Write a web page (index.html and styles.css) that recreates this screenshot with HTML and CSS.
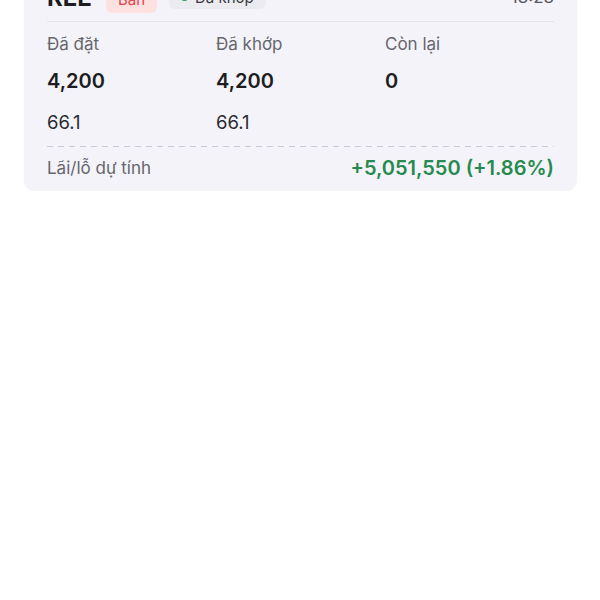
FILE: index.html
```html
<!DOCTYPE html>
<html lang="vi">
<head>
    <meta charset="UTF-8">
    <meta name="viewport" content="width=device-width, initial-scale=1.0">
    <title>Lệnh đã khớp</title>
    <link rel="stylesheet" href="styles.css">
</head>
<body>
    <div class="order-card">
        <div class="order-head">
            <span class="symbol">REE</span>
            <span class="badge badge-sell">Bán</span>
            <span class="badge badge-status"><i class="dot"></i>Đã khớp</span>
            <span class="time">13:23</span>
        </div>
        <div class="order-grid">
            <div class="cell label">Đã đặt</div>
            <div class="cell label">Đã khớp</div>
            <div class="cell label">Còn lại</div>
            <div class="cell qty">4,200</div>
            <div class="cell qty">4,200</div>
            <div class="cell qty">0</div>
            <div class="cell price">66.1</div>
            <div class="cell price">66.1</div>
            <div class="cell price"></div>
        </div>
        <div class="dash"></div>
        <div class="order-foot">
            <span class="foot-label">Lãi/lỗ dự tính</span>
            <span class="foot-value">+5,051,550 (+1.86%)</span>
        </div>
    </div>
</body>
</html>
```

FILE: styles.css
```css
body {
    margin: 0;
    background: #fff;
    font-family: Inter, "Noto Sans", sans-serif;
    color: #1d1d22;
}
.order-card {
    margin: -33px 23px 0 24px;
    padding: 16px 23px 11px;
    background: #f4f3f9;
    border-radius: 12px;
    box-shadow: 0 1px 2px rgba(0, 0, 0, 0.04);
}
.order-head {
    display: flex;
    align-items: center;
    gap: 12px;
    height: 28px;
    padding-bottom: 10px;
    border-bottom: 1px solid #e6e5ec;
}
.symbol {
    font-size: 24px;
    font-weight: 700;
    margin-right: 2px;
}
.badge {
    display: inline-flex;
    align-items: center;
    height: 24px;
    padding: 0 12px;
    border-radius: 6px;
    font-size: 15px;
}
.badge-sell {
    background: #fde1e1;
    color: #e0454a;
    height: 28px;
    padding: 0 12px;
    margin-top: 4px;
}
.badge-status {
    background: #ecebf0;
    color: #3a3a40;
}
.dot {
    width: 7px;
    height: 7px;
    border-radius: 50%;
    background: #2f9a5a;
    margin-right: 7px;
}
.time {
    margin-left: auto;
    font-size: 17px;
    color: #55555c;
}
.order-grid {
    display: grid;
    grid-template-columns: repeat(3, 1fr);
    padding-top: 11px;
}
.cell.label {
    font-size: 17px;
    line-height: 22px;
    color: #66666d;
}
.cell.qty {
    font-size: 20px;
    font-weight: 600;
    line-height: 26px;
    margin-top: 13px;
}
.cell.price {
    font-size: 18.5px;
    line-height: 24px;
    margin-top: 16px;
    color: #2a2a30;
}
.dash {
    height: 1px;
    margin-top: 12px;
    background: linear-gradient(to right, #cdccd4 6px, transparent 6px) 0 0 / 11px 1px repeat-x;
}
.order-foot {
    display: flex;
    justify-content: space-between;
    align-items: center;
    padding-top: 9px;
}
.foot-label {
    font-size: 17px;
    line-height: 24px;
    color: #66666d;
}
.foot-value {
    font-size: 20px;
    font-weight: 600;
    line-height: 24px;
    color: #278a4e;
}
```
